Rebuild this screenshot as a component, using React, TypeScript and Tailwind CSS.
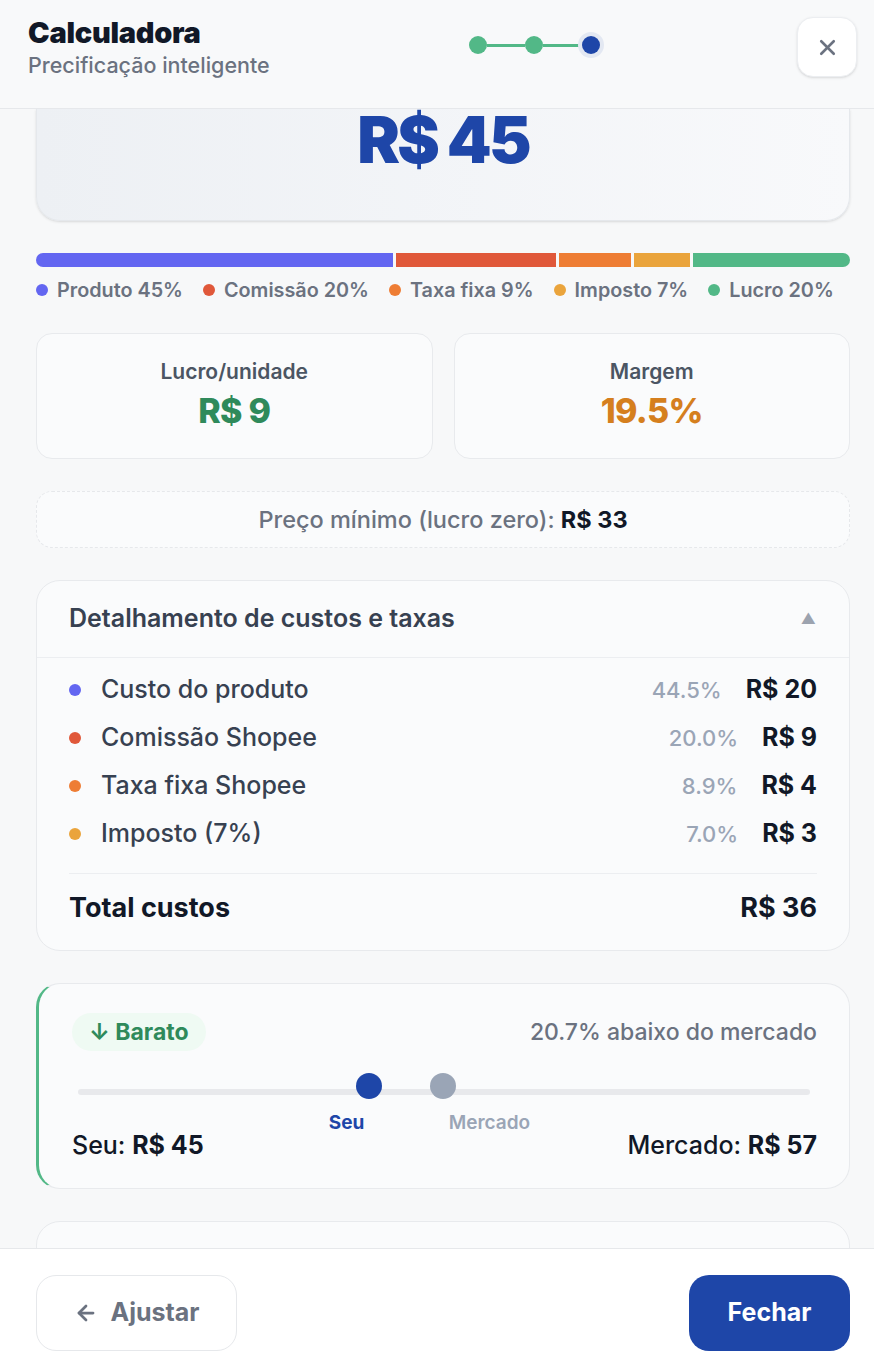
import { ArrowLeft, X } from 'lucide-react';

const segments = [
  { label: 'Produto', pct: '45%', width: 44.5, color: 'bg-[#6366f1]' },
  { label: 'Comissão', pct: '20%', width: 20, color: 'bg-[#e0583a]' },
  { label: 'Taxa fixa', pct: '9%', width: 8.9, color: 'bg-[#ee7d34]' },
  { label: 'Imposto', pct: '7%', width: 7, color: 'bg-[#eaa43c]' },
  { label: 'Lucro', pct: '20%', width: 19.6, color: 'bg-[#52b887]' },
];

const costs = [
  { label: 'Custo do produto', pct: '44.5%', value: 'R$ 20', color: 'bg-[#6366f1]' },
  { label: 'Comissão Shopee', pct: '20.0%', value: 'R$ 9', color: 'bg-[#e0583a]' },
  { label: 'Taxa fixa Shopee', pct: '8.9%', value: 'R$ 4', color: 'bg-[#ee7d34]' },
  { label: 'Imposto (7%)', pct: '7.0%', value: 'R$ 3', color: 'bg-[#eaa43c]' },
];

export default function App() {
  return (
    <div
      className="h-[1368px] w-full flex flex-col bg-[#f7f8f9] text-[#111827] overflow-hidden"
      style={{ fontFamily: 'Inter, "Noto Sans", sans-serif' }}
    >
      {/* Header */}
      <header className="h-[109px] shrink-0 flex items-start justify-between pl-7 pr-[17px] pt-4 border-b border-[#e6e8eb] bg-[#f8f9fa] relative z-10">
        <div className="flex flex-col">
          <h1 className="text-[29px] leading-[34px] font-black tracking-[-0.01em] text-[#111827]">Calculadora</h1>
          <p className="text-[21.5px] leading-[30px] font-medium text-[#6b7280]">Precificação inteligente</p>
        </div>

        <div className="flex items-center mt-5 pl-[2px]">
          <span className="w-[18px] h-[18px] rounded-full bg-[#52b887]" />
          <span className="w-[38px] h-[3px] bg-[#52b887]" />
          <span className="w-[18px] h-[18px] rounded-full bg-[#52b887]" />
          <span className="w-[39px] h-[3px] bg-[#52b887]" />
          <span className="w-[18px] h-[18px] rounded-full bg-[#1e46a8] ring-4 ring-[#e3e8f2]" />
        </div>

        <button className="w-[60px] h-[60px] mt-[1px] rounded-2xl bg-white border border-[#eceef1] shadow-sm flex items-center justify-center text-[#6b7280]">
          <X size={25} strokeWidth={2.5} />
        </button>
      </header>

      {/* Scrolling content */}
      <main className="flex-1 overflow-hidden">
        <div className="pl-9 pr-6 flex flex-col">
          {/* Price card, scrolled so only its lower part shows */}
          <div className="rounded-b-3xl border-x border-b border-[#e5e8ec] bg-gradient-to-r from-[#edf0f4] to-[#f8f9fb] pt-[1px] pb-[50px] shadow-sm">
            <div className="text-center text-[64px] leading-[60px] font-black tracking-[-0.045em] text-[#1e46a8]">R$ 45</div>
          </div>

          {/* Stacked bar */}
          <div className="mt-8 flex h-[14px] gap-[3px] rounded-full overflow-hidden">
            {segments.map((s) => (
              <div key={s.label} className={s.color} style={{ width: `${s.width}%` }} />
            ))}
          </div>
          <div className="mt-[11px] flex items-center gap-x-5">
            {segments.map((s) => (
              <div key={s.label} className="flex items-center gap-[9px]">
                <span className={`w-[12px] h-[12px] rounded-full ${s.color}`} />
                <span className="text-[19.8px] leading-[24px] font-semibold text-[#6b7280]">
                  {s.label} {s.pct}
                </span>
              </div>
            ))}
          </div>

          {/* Stats */}
          <div className="mt-[31px] grid grid-cols-2 gap-[21px]">
            <div className="rounded-2xl border border-[#e8eaed] bg-[#fafbfc] flex flex-col items-center pt-[25px] pb-[27px] gap-[6px]">
              <span className="text-[21px] leading-[26px] font-semibold text-[#4b5563]">Lucro/unidade</span>
              <span className="text-[34px] leading-[40px] font-extrabold tracking-[-0.02em] text-[#2f8a5b]">R$ 9</span>
            </div>
            <div className="rounded-2xl border border-[#e8eaed] bg-[#fafbfc] flex flex-col items-center pt-[25px] pb-[27px] gap-[6px]">
              <span className="text-[21px] leading-[26px] font-semibold text-[#4b5563]">Margem</span>
              <span className="text-[34px] leading-[40px] font-extrabold tracking-[-0.02em] text-[#d57f1e]">19.5%</span>
            </div>
          </div>

          {/* Min price */}
          <div className="mt-8 h-[57px] rounded-2xl border border-dashed border-[#e6e8eb] bg-[#fafbfc] flex items-center justify-center">
            <span className="text-[23.5px] font-medium text-[#6b7280]">
              Preço mínimo (lucro zero): <b className="font-bold text-[#111827]">R$ 33</b>
            </span>
          </div>

          {/* Breakdown */}
          <div className="mt-8 rounded-3xl border border-[#e8eaed] bg-[#fafbfc]">
            <div className="h-[77px] px-8 flex items-center justify-between border-b border-[#eceef1]">
              <span className="text-[25px] font-semibold text-[#374151]">Detalhamento de custos e taxas</span>
              <span className="text-[15px] text-[#9ca3af] pr-[1px]">▲</span>
            </div>
            <div className="px-8 pt-[8px] pb-2">
              {costs.map((c) => (
                <div key={c.label} className="h-12 flex items-center">
                  <span className={`w-[12px] h-[12px] rounded-full ${c.color}`} />
                  <span className="ml-[20px] flex-1 text-[25px] font-medium text-[#374151]">{c.label}</span>
                  <span className="text-[22px] font-medium text-[#9aa5b6]">{c.pct}</span>
                  <span className="ml-6 text-[25px] font-bold text-[#111827]">{c.value}</span>
                </div>
              ))}
              <div className="mt-[15px] border-t border-[#eceef1] py-5 flex items-center justify-between">
                <span className="text-[27px] leading-[28px] font-bold text-[#111827]">Total custos</span>
                <span className="text-[27px] leading-[28px] font-bold text-[#111827]">R$ 36</span>
              </div>
            </div>
          </div>

          {/* Market comparison */}
          <div className="mt-8 rounded-3xl border border-[#e8eaed] border-l-[3px] border-l-[#52b887] bg-[#fafbfc] pt-[29px] pb-[29px] pl-[33px] pr-8">
            <div className="flex items-center justify-between">
              <span className="h-[38px] px-[17px] rounded-full bg-[#effaf3] flex items-center text-[23px] font-bold text-[#2f8a5b]">
                ↓ Barato
              </span>
              <span className="text-[23px] font-medium text-[#6b7280]">20.7% abaixo do mercado</span>
            </div>
            <div className="relative mt-[22px] h-[58px] ml-[6px] mr-[7px]">
              <div className="absolute left-0 right-0 top-[16px] h-[6px] rounded-full bg-[#e8e9ec]" />
              <span className="absolute top-0 left-[39.7%] -translate-x-1/2 w-[26px] h-[26px] rounded-full bg-[#1e46a8]" />
              <span className="absolute top-0 left-[49.9%] -translate-x-1/2 w-[26px] h-[26px] rounded-full bg-[#9aa5b6]" />
              <span className="absolute top-[39px] left-[36.7%] -translate-x-1/2 text-[19px] leading-[22px] font-bold text-[#1e46a8]">Seu</span>
              <span className="absolute top-[39px] left-[56.2%] -translate-x-1/2 text-[19px] leading-[22px] font-semibold text-[#9aa5b6]">Mercado</span>
            </div>
            <div className="flex items-center justify-between text-[25px] leading-[28px] font-medium text-[#111827]">
              <span>
                Seu: <b className="font-bold">R$ 45</b>
              </span>
              <span>
                Mercado: <b className="font-bold">R$ 57</b>
              </span>
            </div>
          </div>

          {/* Next card (partially visible, content below the fold) */}
          <div className="mt-8 rounded-3xl border border-[#e8eaed] bg-[#fafbfc] h-[160px]" />
        </div>
      </main>

      {/* Footer */}
      <footer className="h-[120px] shrink-0 border-t border-[#e6e8eb] bg-white pl-9 pr-6 pt-[26px] flex justify-between">
        <button className="h-[76px] w-[201px] rounded-[20px] border border-[#e6e8eb] bg-white flex items-center justify-center gap-[13px] text-[25px] font-bold text-[#6b7280]">
          <ArrowLeft size={24} strokeWidth={2.75} />
          Ajustar
        </button>
        <button className="h-[76px] w-[161px] rounded-[20px] bg-[#1e46a8] flex items-center justify-center text-[25px] font-bold text-white">
          Fechar
        </button>
      </footer>
    </div>
  );
}
